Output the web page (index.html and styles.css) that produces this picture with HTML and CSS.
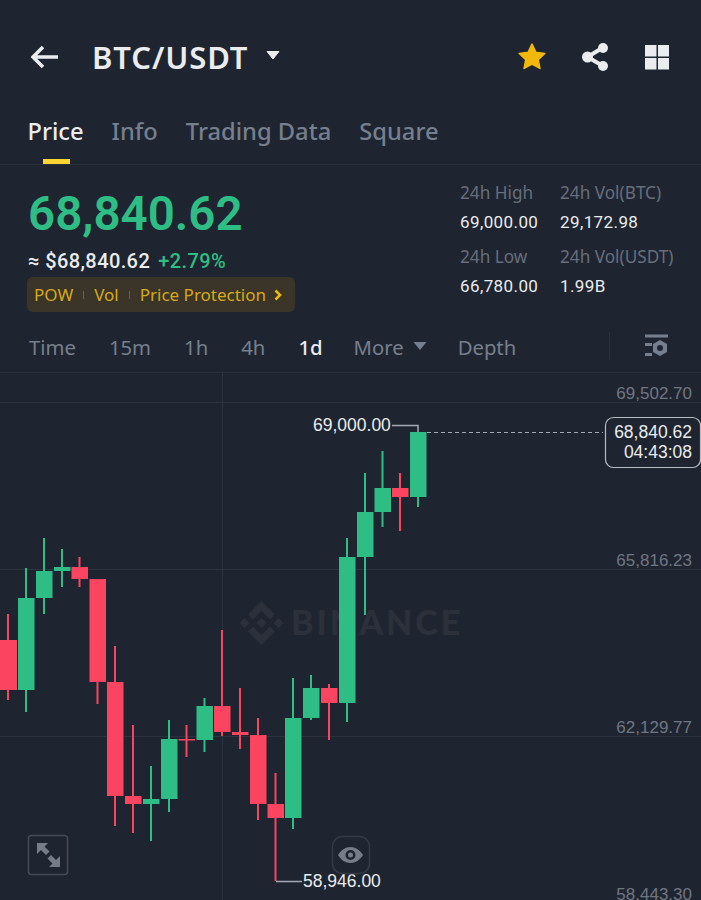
FILE: index.html
```html
<!DOCTYPE html>
<html lang="en">
<head>
<meta charset="utf-8">
<title>BTC/USDT</title>
<link rel="stylesheet" href="styles.css">
</head>
<body>
<main class="app">
  <header class="topbar">
    <svg class="icon-back" width="28" height="24" viewBox="0 0 28 24"><path d="M27 12H2M12 2L2 12l10 10"/></svg>
    <h1 class="pair">BTC/USDT</h1>
    <svg class="icon-caret" width="16" height="11" viewBox="0 0 16 11"><path d="M2 1.500h12L8 9z"/></svg>
    <div class="actions">
      <svg width="32" height="32" viewBox="0 0 30 30"><path class="star" d="M15 3l3.600 7.600 8.400 1.100-6.200 5.700 1.600 8.300-7.400-4.100-7.400 4.100 1.600-8.300L3 11.700l8.400-1.100z"/></svg>
      <svg width="30" height="30" viewBox="0 0 30 30"><path class="share-line" d="M22 5.500L6.500 15 22 24"/><circle class="fill-light" cx="22" cy="6" r="5"/><circle class="fill-light" cx="6.500" cy="15" r="5.500"/><circle class="fill-light" cx="22" cy="24" r="5"/></svg>
      <svg width="26" height="26" viewBox="0 0 26 26"><path class="fill-light" d="M1 1h11.500v11.500H1zM14 1h11v11.500H14zM1 14h11.500v11.500H1zM14 14h11v11.500H14z"/></svg>
    </div>
  </header>

  <nav class="tabs">
    <a class="tab active">Price</a>
    <a class="tab">Info</a>
    <a class="tab">Trading Data</a>
    <a class="tab">Square</a>
  </nav>

  <section class="summary">
    <div class="quote">
      <div class="last">68,840.62</div>
      <div class="fiat"><span class="approx">≈ $68,840.62</span><span class="change">+2.79%</span></div>
      <div class="tags">
        <span>POW</span><i class="tag-sep"></i><span>Vol</span><i class="tag-sep"></i><span>Price Protection</span>
        <svg width="10" height="12" viewBox="0 0 10 12"><path d="M2.500 1.500L7 6l-4.500 4.500"/></svg>
      </div>
    </div>
    <dl class="stats">
      <div><dt>24h High</dt><dd>69,000.00</dd></div>
      <div><dt>24h Vol(BTC)</dt><dd>29,172.98</dd></div>
      <div><dt>24h Low</dt><dd>66,780.00</dd></div>
      <div><dt>24h Vol(USDT)</dt><dd>1.99B</dd></div>
    </dl>
  </section>

  <nav class="intervals">
    <a class="iv">Time</a>
    <a class="iv">15m</a>
    <a class="iv">1h</a>
    <a class="iv">4h</a>
    <a class="iv current">1d</a>
    <a class="iv iv-more">More<svg width="16" height="10" viewBox="0 0 16 10"><path d="M1.500 1h13L8 9z"/></svg></a>
    <a class="iv">Depth</a>
    <span class="iv-sep"></span>
    <svg class="iv-settings" width="24" height="26" viewBox="0 0 24 26"><path d="M0 1.500h23v3H0zM0 10h7v3H0zM0 20h7v3H0z"/><path fill-rule="evenodd" d="M15 7l7 4v8l-7 4-7-4v-8zM15 12a3 3 0 1 0 0 6 3 3 0 0 0 0-6z"/></svg>
  </nav>

  <section class="chart">
    <svg class="plot" width="701" height="527" viewBox="0 373 701 527">
      <path class="grid" d="M0 402.500H701M0 569.500H701M0 736.500H701M222.500 373V900"/>
      <g class="mark">
        <path transform="translate(239.500 601) scale(1.375)" d="M9.790 13.440L16 7.230l6.210 6.210 3.600-3.600L16 0 6.190 9.840zM0 16l3.600-3.600L7.200 16l-3.600 3.600zM9.790 18.560L16 24.770l6.210-6.210 3.600 3.600L16 32l-9.810-9.840zM24.800 16l3.600-3.600L32 16l-3.600 3.600zM19.650 16L16 12.350 12.350 16 16 19.650z"/>
        <text class="mark-text" x="291" y="635">BINANCE</text>
      </g>
      <g class="down">
        <path d="M8 614V700M79.500 557V587M97.500 579V704M115 646V826M133 725V833M186.500 725V757M222 630V736M240 688V749M258 718V820M275.500 773V881M329 684V740M400 473V531"/>
        <path class="body" d="M0 640h17v50H0zM71.500 567h16.500v12H71.500zM89.500 579h16.500v103H89.500zM107 682h16.500v114H107zM125 796h16.500v8H125zM178.500 739h16.500v1.500H178.500zM214 706h16.500v26H214zM232 732h16.500v3H232zM250 735h16.500v69H250zM267.500 804h16.500v14H267.500zM321 688h16.500v15H321zM392 488h16.500v9H392z"/>
      </g>
      <g class="up">
        <path d="M26 568V712M44 538V614M62 549V587M151 766V841M169 720V812M204.500 698V752M293 678V829M311 675V720M347 538V722M365 473V615M382.500 451V527M418 432V507"/>
        <path class="body" d="M18 598h16.500v92H18zM36 571h16.500v27H36zM54 567h16.500v4H54zM143 799h16.500v5H143zM161 739h16.500v60H161zM196.500 706h16.500v34H196.500zM285 718h16.500v100H285zM303 688h16.500v30H303zM339 557h16.500v146H339zM357 512h16.500v45H357zM374.500 488h16.500v24H374.500zM410 432h16.500v65H410z"/>
      </g>
      <path class="leader" d="M392 425.500H418V432M276 881.500H302"/>
      <path class="dash" d="M427 432.500H603"/>
      <text class="axis" x="692" y="399">69,502.70</text>
      <text class="axis" x="692" y="566">65,816.23</text>
      <text class="axis" x="692" y="733">62,129.77</text>
      <text class="axis" x="692" y="900">58,443.30</text>
      <text class="extreme" x="313" y="431">69,000.00</text>
      <text class="extreme" x="303" y="887">58,946.00</text>
      <rect class="last-box" x="605.500" y="417.500" width="95" height="50" rx="8"/>
      <text class="last-price" x="692" y="438">68,840.62</text>
      <text class="last-price" x="692" y="458">04:43:08</text>
      <rect class="btn-box" x="28.500" y="835.500" width="39" height="39" rx="3"/>
      <path class="btn-icon" d="M37 843h11l-3.500 3.500 5 5-3.500 3.500-5-5-4 4zM60 867H49l3.500-3.500-5-5 3.500-3.500 5 5 4-4z"/>
      <rect class="eye-box" x="332.500" y="836.500" width="37" height="37" rx="10"/>
      <path class="btn-icon" fill-rule="evenodd" d="M338 855c3-5 7.500-8 12.500-8s9.500 3 12.500 8c-3 5-7.500 8-12.500 8s-9.500-3-12.500-8zM350.500 850a5 5 0 1 0 0 10 5 5 0 0 0 0-10zM350.500 852.500a2.500 2.500 0 1 1 0 5 2.500 2.500 0 0 1 0-5z"/>
    </svg>
  </section>
</main>
</body>
</html>
```
FILE: styles.css
```css
* { box-sizing: border-box; margin: 0; padding: 0; }
html, body { background: #1f2530; }
body { font-family: "Noto Sans", sans-serif; overflow: hidden; }
.app { width: 701px; height: 900px; display: flex; flex-direction: column; overflow: hidden; }

.topbar { height: 106px; padding: 8px 31px 0; display: flex; align-items: center; flex: none; }
.icon-back { fill: none; stroke: #eaecef; stroke-width: 3.500; margin-right: 33px; }
.pair { font-size: 31px; font-weight: 600; color: #eaecef; line-height: 1; letter-spacing: .9px; }
.icon-caret { fill: #eaecef; stroke: #eaecef; stroke-width: 1; stroke-linejoin: round; margin-left: 17px; margin-top: -3px; }
.actions { margin-left: auto; display: flex; align-items: center; gap: 33px; }
.star { fill: #f0b90b; stroke: #f0b90b; stroke-width: 1.500; stroke-linejoin: round; }
.share-line { fill: none; stroke: #eaecef; stroke-width: 4; }
.fill-light { fill: #eaecef; }

.tabs { height: 59px; flex: none; display: flex; gap: 28px; padding: 0 27.500px; border-bottom: 1px solid #2b313c; }
.tab { position: relative; font-size: 23.700px; line-height: 50px; color: #767f8e; font-weight: 500; }
.tab.active { color: #eaecef; }
.tab.active::after { content: ""; position: absolute; left: 15.500px; width: 27px; height: 5px; bottom: 0; background: #fcd535; }

.summary { height: 158px; flex: none; display: flex; justify-content: space-between; padding: 21px 0 0 28px; }
.last { font-family: Roboto, sans-serif; font-weight: 600; font-size: 47.500px; line-height: 56px; color: #2ebd85; }
.fiat { margin-top: 7px; display: flex; gap: 8px; font-family: Roboto, sans-serif; font-weight: 500; font-size: 20px; line-height: 24px; letter-spacing: .4px; }
.approx { color: #eaecef; }
.change { color: #2ebd85; }
.tags { margin-top: 4px; margin-left: -1px; width: 268px; height: 35px; padding: 0 7px; background: #3a3528; border-radius: 6px; display: flex; align-items: center; color: #d6a91a; font-size: 17px; }
.tags svg { fill: none; stroke: #f0b90b; stroke-width: 2.500; margin-left: 7px; }
.tag-sep { width: 1px; height: 8px; background: #6f6135; margin: 0 10px; }

.stats { display: grid; width: 241px; flex: none; margin-top: -8px; grid-template-columns: 100px 141px; grid-auto-rows: 64px; }
.stats dt { font-size: 17.200px; line-height: 29px; color: #666e7c; }
.stats dd { margin-top: 1px; font-family: Roboto, sans-serif; font-size: 17px; line-height: 29px; color: #eaecef; letter-spacing: .4px; }

.intervals { height: 50px; flex: none; position: relative; border-bottom: 1px solid #2b313c; display: flex; align-items: center; gap: 33px; padding: 0 0 1px 29px; font-size: 20.300px; color: #767f8e; }
.iv { line-height: 46px; }
.iv-more { display: flex; align-items: center; gap: 8px; margin-right: -3px; }
.iv-more svg { fill: #767f8e; margin-top: -3px; }
.current { color: #eaecef; font-weight: 500; margin-right: -2px; }
.iv-sep { position: absolute; left: 609px; top: 9px; height: 28px; width: 1px; background: #2b313c; }
.iv-settings { position: absolute; left: 645px; top: 10px; fill: #767f8e; }

.chart { flex: 1; position: relative; min-height: 0; }
.plot { display: block; font-family: "Liberation Sans", sans-serif; }
.grid { stroke: #2c323e; stroke-width: 1; fill: none; }
.mark { fill: #2b303b; }
.mark-text { font-family: Lato, sans-serif; font-weight: 900; font-size: 34px; letter-spacing: 3px; }
.up path { stroke: #2ebd85; stroke-width: 2; fill: none; }
.down path { stroke: #fb4560; stroke-width: 2; fill: none; }
.up .body { fill: #2ebd85; stroke: none; }
.down .body { fill: #fb4560; stroke: none; }
.leader { stroke: #a5abb5; stroke-width: 1.500; fill: none; }
.dash { stroke: #a5abb5; stroke-width: 1; stroke-dasharray: 4 3; fill: none; }
.axis { fill: #6f7683; font-size: 17px; text-anchor: end; }
.extreme { fill: #eaecef; font-size: 17.500px; }
.last-box { fill: #1f2530; stroke: #b7bcc4; stroke-width: 1.200; }
.last-price { fill: #eaecef; font-size: 17.500px; text-anchor: end; }
.btn-box { fill: none; stroke: #444a56; stroke-width: 1.500; }
.eye-box { fill: none; stroke: #333945; stroke-width: 1.500; }
.btn-icon { fill: #767c88; }
```
